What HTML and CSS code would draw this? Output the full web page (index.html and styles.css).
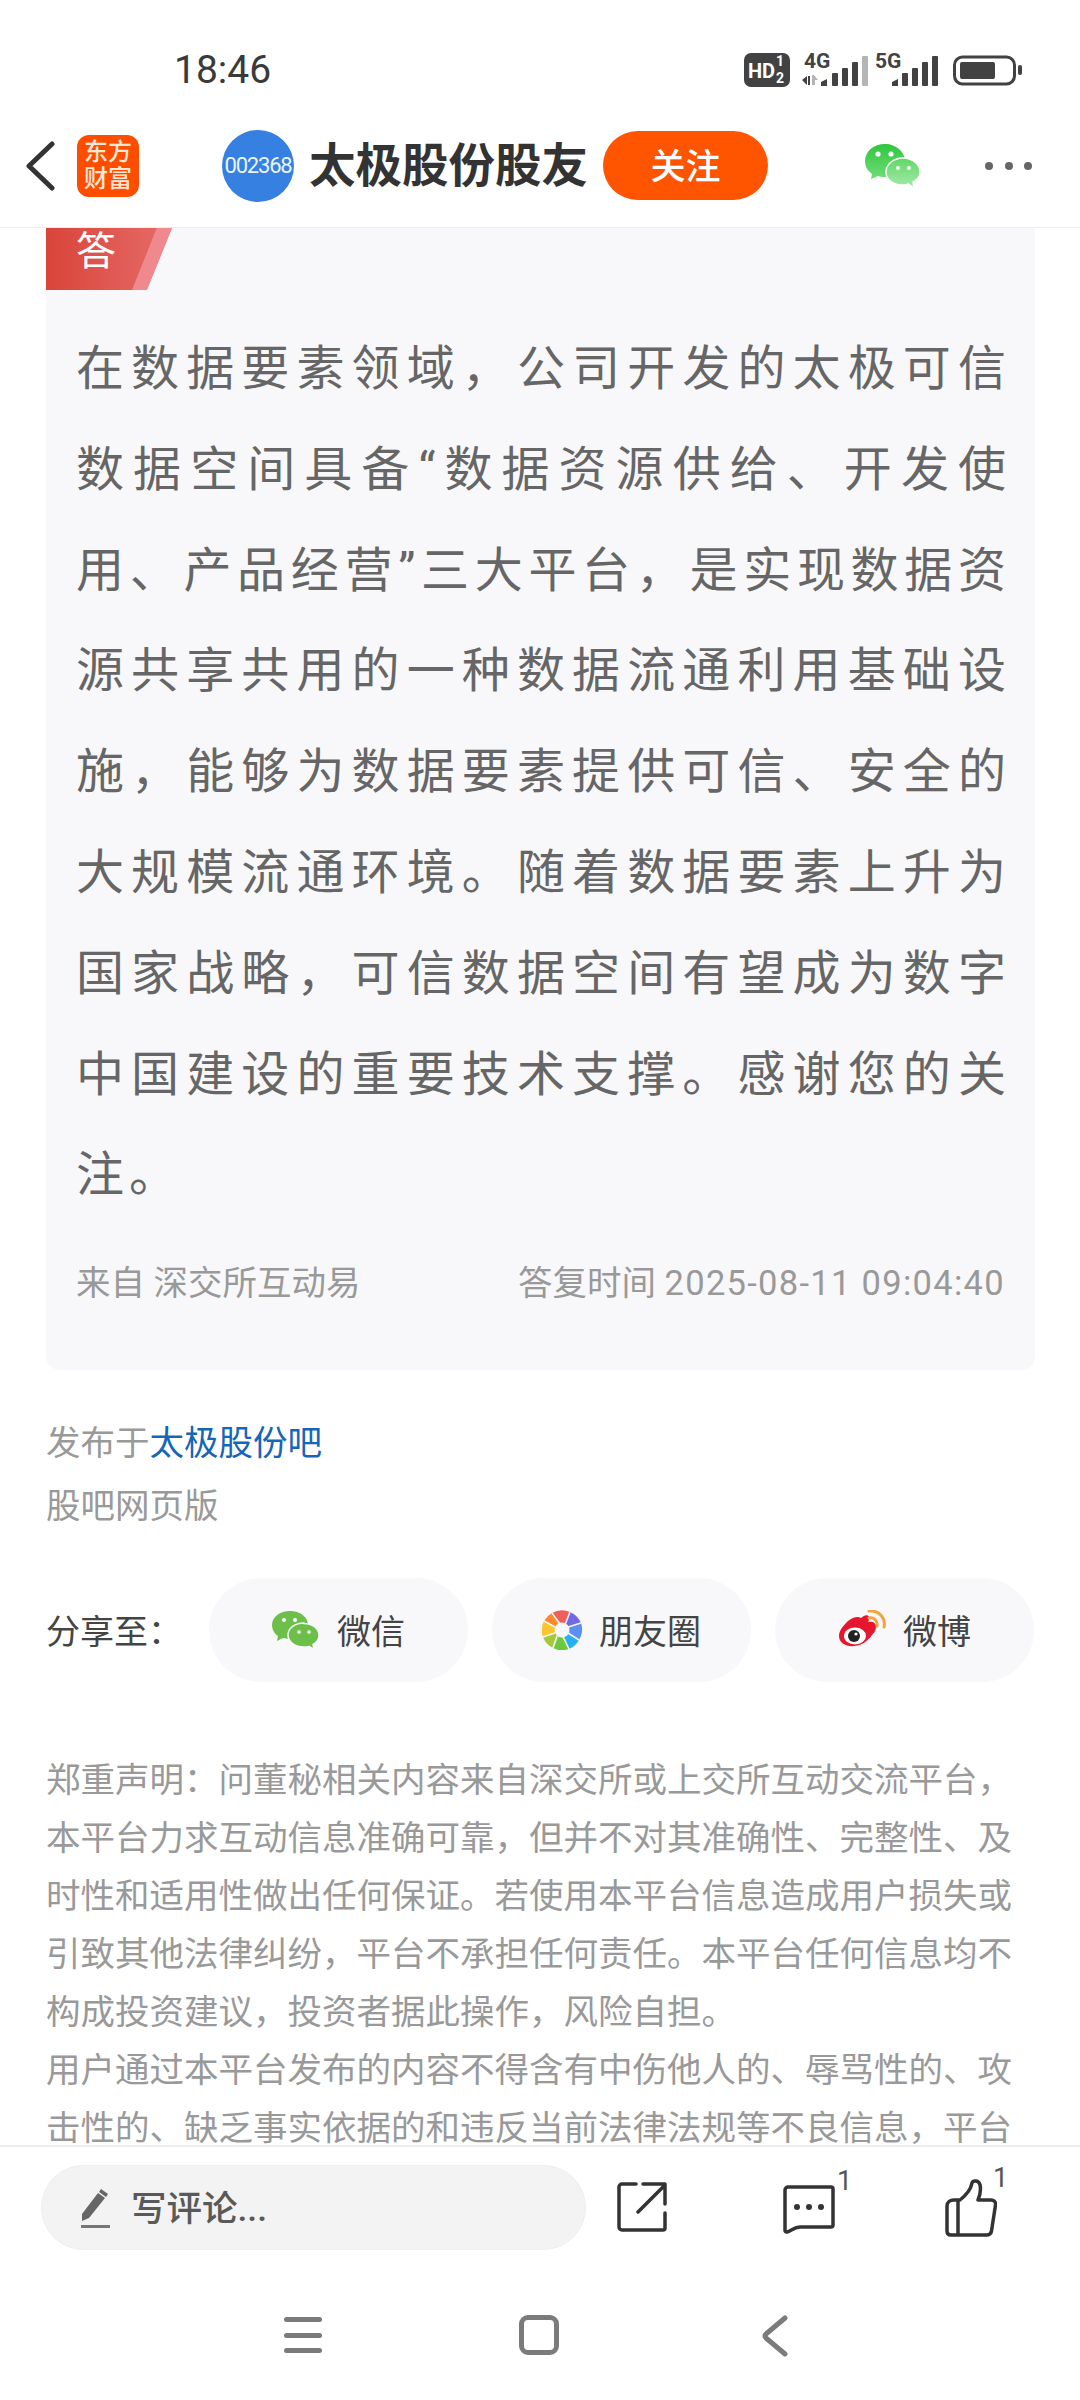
FILE: index.html
```html
<!DOCTYPE html>
<html lang="zh-CN">
<head>
    <meta charset="UTF-8">
    <meta name="viewport" content="width=device-width, initial-scale=1.0">
    <title>太极股份股友</title>
    <link rel="stylesheet" href="styles.css">
</head>
<body>

    <!-- status bar -->
    <div class="status-bar">
        <span class="clock">18:46</span>
        <svg class="status-icons" width="280" height="40" viewBox="0 0 280 40">
            <rect x="0" y="3" width="46" height="34" rx="7" fill="#424242"/>
            <text x="4" y="28" class="st-hd">HD</text>
            <text x="32" y="16" class="st-frac">1</text>
            <text x="32" y="33" class="st-frac">2</text>

            <text x="60" y="18" class="st-net">4G</text>
            <path d="M58 30l5-4v9zM64 26h2v9h-2z" fill="#424242"/>
            <path d="M68 25h2l4 5h-3v5h-3z" fill="#b5b5b5"/>
            <g fill="#424242">
                <path d="M77 36v-4l6-3v7z"/>
                <rect x="88" y="23" width="6" height="13" rx="1"/>
                <rect x="98" y="18" width="6" height="18" rx="1"/>
                <rect x="108" y="12" width="6" height="24" rx="1"/>
            </g>
            <rect x="118" y="6" width="6" height="30" rx="1" fill="#b5b5b5"/>

            <text x="131" y="18" class="st-net">5G</text>
            <g fill="#424242">
                <path d="M148 36v-4l6-3v7z"/>
                <rect x="158" y="23" width="6" height="13" rx="1"/>
                <rect x="168" y="18" width="6" height="18" rx="1"/>
                <rect x="178" y="12" width="6" height="24" rx="1"/>
                <rect x="188" y="6" width="6" height="30" rx="1"/>
            </g>

            <rect x="210.500" y="7" width="60" height="27" rx="8" fill="none" stroke="#424242" stroke-width="3"/>
            <rect x="216" y="12" width="35" height="17" rx="2" fill="#424242"/>
            <rect x="274" y="15" width="4" height="10" rx="2" fill="#424242"/>
        </svg>
    </div>

    <!-- top nav -->
    <div class="top-nav">
        <svg class="back" width="30" height="50" viewBox="0 0 30 50">
            <path d="M27 3L4 25l23 22" fill="none" stroke="#333" stroke-width="5" stroke-linecap="round" stroke-linejoin="round"/>
        </svg>
        <div class="app-logo">东方<br>财富</div>
        <div class="avatar">002368</div>
        <div class="nav-title">太极股份股友</div>
        <div class="follow"><span>关注</span></div>
        <svg class="nav-wechat" width="56" height="46" viewBox="0 0 56 46">
            <defs>
                <linearGradient id="wa" x1="0" y1="0" x2="0" y2="1"><stop offset="0" stop-color="#2fc63f"/><stop offset="1" stop-color="#72dd78"/></linearGradient>
                <linearGradient id="wb" x1="0" y1="0" x2="0" y2="1"><stop offset="0" stop-color="#5fd867"/><stop offset="1" stop-color="#a6eaa8"/></linearGradient>
            </defs>
            <path d="M20 1C9 1 0 8 0 18c0 6 3 10 7 13l-1 5 7-3c2 .6 4 1 7 1 11 0 20-7 20-16S31 1 20 1z" fill="url(#wa)"/>
            <path d="M38 15c-9 0-17 6-17 14s8 13 17 13c2 0 4 0 5-1l6 4-1-6c4-2 7-6 7-10 0-8-8-14-17-14z" fill="url(#wb)" stroke="#fff" stroke-width="1.5"/>
            <circle cx="13" cy="11" r="2.6" fill="#fff"/><circle cx="26" cy="11" r="2.6" fill="#fff"/>
            <circle cx="33" cy="25" r="2" fill="#fff"/><circle cx="44" cy="25" r="2" fill="#fff"/>
        </svg>
        <div class="nav-more"><i></i><i></i><i></i></div>
    </div>

    <div class="content">
        <div class="answer-card">
            <div class="answer-tag"><span>答</span></div>
            <p class="answer-text">在数据要素领域，公司开发的太极可信数据空间具备“数据资源供给、开发使用、产品经营”三大平台，是实现数据资源共享共用的一种数据流通利用基础设施，能够为数据要素提供可信、安全的大规模流通环境。随着数据要素上升为国家战略，可信数据空间有望成为数字中国建设的重要技术支撑。感谢您的关注。</p>
            <div class="answer-meta">
                <span>来自 深交所互动易</span>
                <span>答复时间 <span class="answer-date">2025-08-11 09:04:40</span></span>
            </div>
        </div>

        <div class="source">发布于<a class="bar-link">太极股份吧</a></div>
        <div class="source">股吧网页版</div>

        <div class="share">
            <span class="share-label">分享至：</span>
            <div class="share-btn">
                <svg width="48" height="40" viewBox="0 0 48 40">
                    <path d="M18 1C8 1 0 7 0 15c0 5 3 9 6 11l-1 5 6-3c2 .5 4 .8 7 .8 10 0 18-6 18-14S28 1 18 1z" fill="#6cc04a"/>
                    <path d="M32 13c-9 0-16 5-16 12s7 12 16 12c2 0 3 0 5-.6l5 3-1-5c4-2 6-5 6-9 0-7-7-12-15-12z" fill="#6cc04a" stroke="#f8f8fa" stroke-width="1.5"/>
                    <circle cx="12" cy="10" r="2" fill="#fff"/><circle cx="23" cy="10" r="2" fill="#fff"/>
                    <circle cx="27" cy="22" r="1.8" fill="#fff"/><circle cx="37" cy="22" r="1.8" fill="#fff"/>
                </svg>
                <span>微信</span>
            </div>
            <div class="share-btn">
                <svg width="40" height="40" viewBox="0 0 40 40">
                    <path d="M20 20L10 3A20 20 0 0 1 28 2z" fill="#f0605a"/>
                    <path d="M20 20L28 2A20 20 0 0 1 39 13z" fill="#7268e8"/>
                    <path d="M20 20L39 13A20 20 0 0 1 37 30z" fill="#5b8ff5"/>
                    <path d="M20 20L37 30A20 20 0 0 1 27 39z" fill="#25b0f5"/>
                    <path d="M20 20L27 39A20 20 0 0 1 11 38z" fill="#6cc83c"/>
                    <path d="M20 20L11 38A20 20 0 0 1 1 27z" fill="#a5c93a"/>
                    <path d="M20 20L1 27A20 20 0 0 1 2 11z" fill="#fcc42e"/>
                    <path d="M20 20L2 11A20 20 0 0 1 10 3z" fill="#fb8a2b"/>
                    <g fill="none" stroke="#f8f8fa" stroke-width="1.500">
                        <path d="M10 3l8 11M28 2l-5 13M39 13l-13 4M37 30l-11-7M27 39l-6-12M11 38l4-12M1 27l12-4M2 11l11 6"/>
                    </g>
                    <circle cx="20" cy="20" r="7.500" fill="#f8f8fa"/>
                </svg>
                <span>朋友圈</span>
            </div>
            <div class="share-btn">
                <svg width="48" height="40" viewBox="0 0 48 40">
                    <path d="M23 8c3-3 7-4 8-1 .6 2-.4 4-1 5 4-1 8 0 8 5 0 2-1 5-4 8-4 6-10 10-17 11C8 37 1 33 1 26c0-6 5-11 9-15 5-4 10-5 13-3z" fill="#e6162d"/>
                    <ellipse cx="17" cy="26" rx="11" ry="8.500" fill="#fff"/>
                    <circle cx="16" cy="26" r="6" fill="#222"/>
                    <circle cx="18" cy="24" r="1.600" fill="#fff"/>
                    <path d="M31 8c5-1 9 3 8 8M31 1c10-1 17 7 15 16" fill="none" stroke="#f5a33f" stroke-width="3" stroke-linecap="round"/>
                </svg>
                <span>微博</span>
            </div>
        </div>

        <p class="disclaimer">郑重声明：问董秘相关内容来自深交所或上交所互动交流平台，本平台力求互动信息准确可靠，但并不对其准确性、完整性、及时性和适用性做出任何保证。若使用本平台信息造成用户损失或引致其他法律纠纷，平台不承担任何责任。本平台任何信息均不构成投资建议，投资者据此操作，风险自担。</p>
        <p class="disclaimer">用户通过本平台发布的内容不得含有中伤他人的、辱骂性的、攻击性的、缺乏事实依据的和违反当前法律法规等不良信息，平台</p>
    </div>

    <!-- comment bar -->
    <div class="comment-bar">
        <div class="comment-input">
            <svg width="30" height="40" viewBox="0 0 30 40">
                <path d="M1 26L17 5l7 5L8 30l-7 3z" fill="#666"/>
                <path d="M20 1l7 5-2 3-7-5z" fill="#666"/>
                <rect x="0" y="37" width="29" height="3" fill="#777"/>
            </svg>
            <span>写评论...</span>
        </div>
        <svg class="bar-share" width="50" height="50" viewBox="0 0 50 50">
            <path d="M19 2H5a3 3 0 0 0-3 3v40a3 3 0 0 0 3 3h41a2 2 0 0 0 2-2V31" fill="none" stroke="#333" stroke-width="3.500" stroke-linecap="round"/>
            <path d="M26 2h22v20M48 3L21 30" fill="none" stroke="#333" stroke-width="3.500" stroke-linecap="round" stroke-linejoin="round"/>
        </svg>
        <div class="bar-count bar-comment">
            <svg width="52" height="50" viewBox="0 0 52 50">
                <path d="M2 5a3 3 0 0 1 3-3h43a2 2 0 0 1 2 2v36a2 2 0 0 1-2 2H17c-6 0-9 4-13 5-1.400.3-2-.5-2-2z" fill="none" stroke="#333" stroke-width="3.500" stroke-linejoin="round"/>
                <circle cx="14" cy="22" r="3" fill="#333"/><circle cx="26" cy="22" r="3" fill="#333"/><circle cx="38" cy="22" r="3" fill="#333"/>
            </svg>
            <sup>1</sup>
        </div>
        <div class="bar-count bar-like">
            <svg width="52" height="58" viewBox="0 0 52 58">
                <path d="M15 21c5-4 11-11 12-17 1-3 7-3 8 2 1 4 0 10-2 15h13c3 0 5 2 4.500 5l-4 26c-.5 3-2 4-5 4H6c-2.500 0-4-1-4-4V27c0-4 3-6 7-6z" fill="none" stroke="#333" stroke-width="3.500" stroke-linejoin="round"/>
                <path d="M13 22v34" fill="none" stroke="#333" stroke-width="3.500"/>
            </svg>
            <sup>1</sup>
        </div>
    </div>

    <!-- system nav -->
    <div class="system-nav">
        <div class="sys-menu"><i></i><i></i><i></i></div>
        <div class="sys-home"></div>
        <svg width="26" height="42" viewBox="0 0 26 42">
            <path d="M23 3L4 19a2.500 2.500 0 0 0 0 4l19 16" fill="none" stroke="#7b7b7b" stroke-width="5" stroke-linecap="round"/>
        </svg>
    </div>

</body>
</html>
```

FILE: styles.css
```css
* {
    box-sizing: border-box;
}
html, body {
    margin: 0;
    padding: 0;
}
body {
    width: 1080px;
    height: 2400px;
    display: flex;
    flex-direction: column;
    overflow: hidden;
    background-color: #fff;
    font-family: Roboto, "Noto Sans CJK SC", sans-serif;
    color: #333;
}

/* status bar */
.status-bar {
    height: 112px;
    flex-shrink: 0;
    display: flex;
    align-items: flex-start;
    padding: 47px 56px 0 174px;
    justify-content: space-between;
}
.clock {
    font-size: 39px;
    line-height: 46px;
    color: #3a3a3a;
}
.status-icons {
    margin-top: 3px;
}
.st-hd {
    font: 700 20px Roboto, sans-serif;
    fill: #fff;
}
.st-frac {
    font: 700 14px Roboto, sans-serif;
    fill: #fff;
}
.st-net {
    font: 700 21px Roboto, sans-serif;
    fill: #424242;
}

/* top nav */
.top-nav {
    height: 116px;
    flex-shrink: 0;
    display: flex;
    align-items: center;
    border-bottom: 1px solid #eeeeee;
    padding: 0 0 8px 25px;
}
.app-logo {
    width: 62px;
    height: 62px;
    margin-left: 22px;
    border-radius: 12px;
    background-color: #ff4d00;
    color: #ffe7d6;
    font-size: 24px;
    font-weight: 500;
    line-height: 27px;
    text-align: center;
    padding-top: 4px;
}
.avatar {
    width: 72px;
    height: 72px;
    margin-left: 83px;
    border-radius: 50%;
    background-color: #3580e0;
    color: #eaf4ff;
    font-size: 22px;
    letter-spacing: -1.200px;
    display: flex;
    align-items: center;
    justify-content: center;
}
.nav-title {
    margin-left: 15px;
    width: 280px;
    padding-bottom: 9px;
    font-size: 46.500px;
    font-weight: 700;
    white-space: nowrap;
    color: #333;
}
.follow {
    width: 165px;
    height: 69px;
    margin-left: 14px;
    padding-bottom: 5px;
    border-radius: 35px;
    background-color: #ff5500;
    color: #fff;
    font-size: 35px;
    font-weight: 500;
    display: flex;
    align-items: center;
    justify-content: center;
}
.nav-wechat {
    margin-left: 97px;
}
.nav-more {
    display: flex;
    gap: 11.500px;
    margin-left: 64px;
}
.nav-more i {
    width: 8px;
    height: 8px;
    border-radius: 50%;
    background-color: #666;
}

/* main area */
.content {
    flex: 1;
    min-height: 0;
    overflow: hidden;
    padding: 0 45px 0 46px;
}
.answer-card {
    background-color: #f8f8fa;
    border-radius: 0 0 14px 14px;
    padding-bottom: 65px;
}
.answer-tag {
    width: 126px;
    height: 62px;
    color: #fff;
    font-size: 40px;
    line-height: 48px;
    padding-left: 30px;
    background: linear-gradient(90deg, #d9443a, #e66c68);
    clip-path: polygon(0 0, 100% 0, 80% 100%, 0 100%);
    position: relative;
}
.answer-tag::after {
    content: "";
    position: absolute;
    top: 0;
    right: 0;
    bottom: 0;
    width: 40px;
    background-color: #f0898d;
    clip-path: polygon(100% 0, 62% 0, 0 100%, 40% 100%);
}
.answer-text {
    margin: 29px 24px 0 30px;
    font-size: 48px;
    line-height: 100.800px;
    letter-spacing: 5px;
    text-align: justify;
    color: #666;
}
.answer-meta {
    display: flex;
    justify-content: space-between;
    margin: 35px 30px 0;
    font-size: 34.500px;
    line-height: 44px;
    color: #999;
}
.answer-date {
    letter-spacing: 1.300px;
}
.source {
    font-size: 34.500px;
    line-height: 63px;
    color: #999;
}
.answer-card + .source {
    margin-top: 42px;
}
.bar-link {
    color: #1565b8;
}
.share {
    display: flex;
    align-items: center;
    margin-top: 40px;
}
.share-label {
    width: 163px;
    flex-shrink: 0;
    padding-bottom: 2px;
    font-size: 34px;
    color: #444;
}
.share-btn {
    width: 259px;
    height: 104px;
    border-radius: 52px;
    background-color: #f8f8fa;
    display: flex;
    align-items: center;
    justify-content: center;
    gap: 17px;
    font-size: 34px;
    color: #444;
    margin-right: 24px;
    flex-shrink: 0;
}
.share-btn span {
    padding-bottom: 2px;
}
.share-btn:last-child {
    margin-right: 0;
}
.disclaimer {
    margin: 0;
    font-size: 34.500px;
    line-height: 58px;
    color: #999;
}
.share + .disclaimer {
    margin-top: 69px;
}

/* comment bar */
.comment-bar {
    height: 125px;
    flex-shrink: 0;
    border-top: 2px solid #eeeeee;
    padding: 18px 0 0 41px;
    display: flex;
    align-items: flex-start;
    position: relative;
}
.comment-input {
    width: 545px;
    height: 85px;
    border-radius: 43px;
    background-color: #f3f3f3;
    border: 1px solid #eeeeee;
    display: flex;
    align-items: center;
    padding-left: 39px;
    gap: 20px;
    font-size: 35.500px;
    font-weight: 500;
    color: #595959;
}
.comment-input span {
    padding-bottom: 5px;
}
.bar-share {
    margin: 17px 0 0 31px;
}
.bar-count {
    position: relative;
    display: flex;
}
.bar-count sup {
    position: absolute;
    font-size: 27px;
    line-height: 27px;
    color: #555;
}
.bar-comment {
    margin: 20px 0 0 116px;
}
.bar-comment sup {
    top: -17px;
    left: 54px;
}
.bar-like {
    margin: 14px 0 0 110px;
}
.bar-like sup {
    top: -14px;
    left: 48px;
}

/* system nav */
.system-nav {
    height: 130px;
    flex-shrink: 0;
    display: flex;
    align-items: flex-start;
    padding: 45px 0 0 284px;
}
.sys-menu {
    width: 38px;
    height: 36px;
    margin-top: 2px;
    display: flex;
    flex-direction: column;
    justify-content: space-between;
}
.sys-menu i {
    height: 5px;
    border-radius: 3px;
    background-color: #7b7b7b;
}
.sys-home {
    width: 40px;
    height: 40px;
    margin: 0 203px 0 197px;
    border: 5px solid #7b7b7b;
    border-radius: 9px;
}
```
